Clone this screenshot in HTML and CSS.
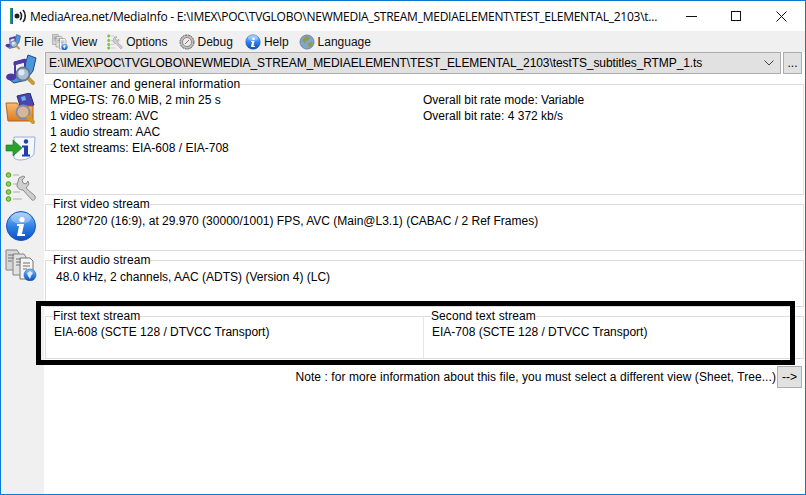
FILE: index.html
```html
<!DOCTYPE html>
<html lang="en">
<head>
    <meta charset="UTF-8">
    <title>MediaArea.net/MediaInfo</title>
    <link rel="stylesheet" href="styles.css">
</head>
<body>
    <svg class="defs" width="0" height="0">
        <defs>
            <linearGradient id="ballBlue" x1="0" y1="0" x2="0" y2="1">
                <stop offset="0" stop-color="#8cc4fa"/>
                <stop offset="0.55" stop-color="#2a7ee6"/>
                <stop offset="1" stop-color="#0d4fb8"/>
            </linearGradient>
            <linearGradient id="folderOrange" x1="0" y1="0" x2="0" y2="1">
                <stop offset="0" stop-color="#f8bd74"/>
                <stop offset="1" stop-color="#dd7a1e"/>
            </linearGradient>
            <symbol id="lens" viewBox="0 0 32 32">
                <path d="M24 25l4 4" stroke="#c89a3a" stroke-width="4" stroke-linecap="round"/>
                <circle cx="18" cy="20" r="6.500" fill="#a9bfd6" stroke="#66788f" stroke-width="1.800"/>
                <circle cx="16.500" cy="18.500" r="3" fill="#dfe9f2"/>
            </symbol>
            <symbol id="music" viewBox="0 0 32 32">
                <path d="M23 1l8 3-3 13-7 9-12 3-4-3 12-5z" fill="#4a97dc" stroke="#2b3f80"/>
                <path d="M9 8l11-3v3L9 11z" fill="#4b38a8" stroke="#4b38a8"/>
                <path d="M10 8v15M20 5v12" stroke="#4b38a8" stroke-width="2"/>
                <ellipse cx="6" cy="23" rx="5" ry="3.500" fill="#4b38a8"/>
                <use href="#lens"/>
            </symbol>
            <symbol id="folder" viewBox="0 0 32 32">
                <path d="M12 3l13-3 4 12-13 4z" fill="#4a46b0" stroke="#2e2b78"/>
                <path d="M16 4l4-1 1 4-4 1z" fill="#6fb0e8"/>
                <path d="M1 10h11l2 3h14v15H3z" fill="url(#folderOrange)" stroke="#b2651c"/>
                <circle cx="18" cy="19" r="6.500" fill="#d8b49a" stroke="#7e8ba0" stroke-width="1.800"/>
                <path d="M23 24l5 5" stroke="#c89a3a" stroke-width="4" stroke-linecap="round"/>
            </symbol>
            <symbol id="docInfo" viewBox="0 0 32 32">
                <path d="M9 5h21l-1 17c-2 4-9 6-14 6-3 0-5-1-6-2z" fill="#f4f7fc" stroke="#9cb0d4"/>
                <path d="M1 13h7V8l9 8-9 8v-5H1z" fill="#2aa12a" stroke="#17701a" stroke-width="0.6"/>
                <circle cx="21" cy="9.500" r="2.200" fill="#1f3fb0"/>
                <path d="M17 13.500h6v9h2v2h-8v-2h2v-7h-2z" fill="#1f3fb0"/>
            </symbol>
            <symbol id="tools" viewBox="0 0 32 32">
                <g fill="#8fd14f" stroke="#4f9c1f">
                    <circle cx="3.500" cy="4" r="2.300"/>
                    <circle cx="3.500" cy="13" r="2.300"/>
                    <circle cx="3.500" cy="21" r="2.300"/>
                    <circle cx="3.500" cy="28" r="2.300"/>
                </g>
                <path d="M8 4h6M8 13h5M8 21h7M8 28h9" stroke="#c4c4c4" stroke-width="1.500"/>
                <path d="M14 7l4-2 2 1-3 3 1 3 3 1 2-3 1 3-3 4 9 8c1 3-1 5-3 4l-9-10c-3 0-6-2-6-5z" fill="#cfcfcf" stroke="#8a8a8a"/>
            </symbol>
            <symbol id="infoBall" viewBox="0 0 32 32">
                <circle cx="16" cy="16" r="14.500" fill="url(#ballBlue)" stroke="#1a57b4"/>
                <ellipse cx="16" cy="8" rx="10" ry="5.500" fill="#fff" fill-opacity="0.3"/>
                <circle cx="17" cy="9.500" r="2.600" fill="#fff"/>
                <path d="M12 14h7l-2 10h3v2h-8l2-10h-2z" fill="#fff"/>
            </symbol>
            <symbol id="docs" viewBox="0 0 32 32">
                <path d="M1 1h11l2 3v17H1z" fill="#d6d6d6" stroke="#848484"/>
                <path d="M8 5h11l2 3v18H8z" fill="#e2e2e2" stroke="#848484"/>
                <path d="M15 9h10l3 3v18H15z" fill="#f4f4f4" stroke="#767676"/>
                <path d="M3 6h6M3 9h6M3 12h4M11 10h5M11 13h5M11 16h4M18 14h7M18 17h7M18 20h4" stroke="#707070"/>
                <circle cx="25" cy="26" r="6" fill="url(#ballBlue)" stroke="#1a57b4" stroke-width="0.6"/>
                <path d="M22 24l3-2 3 2-2 3-1 3-2-3z" fill="#dbe9f8"/>
            </symbol>
            <symbol id="debug" viewBox="0 0 16 16">
                <circle cx="8" cy="8" r="7" fill="#bdbdbd" stroke="#5c5c5c" stroke-dasharray="2 0.800"/>
                <circle cx="8" cy="8" r="4.500" fill="#ededed" stroke="#8a8a8a"/>
                <path d="M6 10l4-4" stroke="#b5574c" stroke-width="1"/>
            </symbol>
            <symbol id="globe" viewBox="0 0 16 16">
                <circle cx="8" cy="8" r="7" fill="#7fa6cf" stroke="#6d8aa8"/>
                <path d="M3 6l4-4 4 1-1 3-3 1-1 3zM9 9l4-1 1 2-3 4-2-2z" fill="#8f9c4f"/>
            </symbol>
        </defs>
    </svg>

    <div class="window">
        <div class="titlebar">
            <svg class="app-icon" width="18" height="18" viewBox="0 0 18 18">
                <path d="M1.500 1v16" stroke="#1aa64a" stroke-width="1"/>
                <path d="M2.500 1v16" stroke="#d0342c" stroke-width="1"/>
                <path d="M3.500 1v16" stroke="#2a55c8" stroke-width="1"/>
                <circle cx="8" cy="9" r="2.500" fill="#222"/>
                <path d="M11 5c2 2 2 6 0 8M14 3c3 3 3 9 0 12" fill="none" stroke="#222" stroke-width="1.600"/>
            </svg>
            <span class="title">MediaArea.net/MediaInfo - E:\IMEX\POC\TVGLOBO\NEWMEDIA_STREAM_MEDIAELEMENT\TEST_ELEMENTAL_2103\t...</span>
            <div class="controls">
                <svg width="11" height="11" viewBox="0 0 11 11"><path d="M0 5.500h11" stroke="#111"/></svg>
                <svg width="11" height="11" viewBox="0 0 11 11"><rect x="0.500" y="0.500" width="9" height="9" fill="none" stroke="#111"/></svg>
                <svg width="11" height="11" viewBox="0 0 11 11"><path d="M0.500 0.500l10 10M10.500 0.500l-10 10" stroke="#111"/></svg>
            </div>
        </div>

        <div class="menu">
            <span class="menu-item"><svg class="small"><use href="#music"/></svg>File</span>
            <span class="menu-item"><svg class="small"><use href="#docs"/></svg>View</span>
            <span class="menu-item"><svg class="small"><use href="#tools"/></svg>Options</span>
            <span class="menu-item"><svg class="small"><use href="#debug"/></svg>Debug</span>
            <span class="menu-item"><svg class="small"><use href="#infoBall"/></svg>Help</span>
            <span class="menu-item"><svg class="small"><use href="#globe"/></svg>Language</span>
        </div>

        <div class="main">
            <div class="sidebar">
                <svg class="big"><use href="#music"/></svg>
                <svg class="big"><use href="#folder"/></svg>
                <svg class="big"><use href="#docInfo"/></svg>
                <svg class="big"><use href="#tools"/></svg>
                <svg class="big"><use href="#infoBall"/></svg>
                <svg class="big"><use href="#docs"/></svg>
            </div>

            <div class="content">
                <div class="path-row">
                    <div class="combo">
                        <span>E:\IMEX\POC\TVGLOBO\NEWMEDIA_STREAM_MEDIAELEMENT\TEST_ELEMENTAL_2103\testTS_subtitles_RTMP_1.ts</span>
                        <svg width="10" height="6" viewBox="0 0 10 6"><path d="M0.500 0.500L5 5l4.500-4.500" fill="none" stroke="#444"/></svg>
                    </div>
                    <div class="btn browse">...</div>
                </div>

                <fieldset class="group general">
                    <legend>Container and general information</legend>
                    <div class="columns">
                        <div class="col">
                            <div>MPEG-TS: 76.0 MiB, 2 min 25 s</div>
                            <div>1 video stream: AVC</div>
                            <div>1 audio stream: AAC</div>
                            <div>2 text streams: EIA-608 / EIA-708</div>
                        </div>
                        <div class="col">
                            <div>Overall bit rate mode: Variable</div>
                            <div>Overall bit rate: 4 372 kb/s</div>
                        </div>
                    </div>
                </fieldset>

                <fieldset class="group stream">
                    <legend>First video stream</legend>
                    <div class="stream-text">1280*720 (16:9), at 29.970 (30000/1001) FPS, AVC (Main@L3.1) (CABAC / 2 Ref Frames)</div>
                </fieldset>

                <fieldset class="group stream">
                    <legend>First audio stream</legend>
                    <div class="stream-text">48.0 kHz, 2 channels, AAC (ADTS) (Version 4) (LC)</div>
                </fieldset>

                <div class="text-streams">
                    <fieldset class="group text-group">
                        <legend>First text stream</legend>
                        <div class="text-line">EIA-608 (SCTE 128 / DTVCC Transport)</div>
                    </fieldset>
                    <fieldset class="group text-group">
                        <legend>Second text stream</legend>
                        <div class="text-line">EIA-708 (SCTE 128 / DTVCC Transport)</div>
                    </fieldset>
                    <div class="highlight"></div>
                </div>

                <div class="note-row">
                    <span class="note">Note : for more information about this file, you must select a different view (Sheet, Tree...)</span>
                    <div class="btn next">--&gt;</div>
                </div>
            </div>
        </div>
    </div>
</body>
</html>
```

FILE: styles.css
```css
body {
    margin: 0;
    background: #fff;
    color: #000;
    font-family: "Liberation Sans", Arial, sans-serif;
    font-size: 12px;
}

.defs {
    display: block;
    height: 0;
}

.window {
    box-sizing: border-box;
    width: 806px;
    height: 495px;
    border: 1px solid #0a7ad6;
    display: flex;
    flex-direction: column;
    overflow: hidden;
}

.titlebar {
    height: 30px;
    flex: none;
    display: flex;
    align-items: center;
    background: #fff;
}

.app-icon {
    margin-left: 8px;
    margin-right: 3px;
}

.title {
    font-family: "Open Sans", sans-serif;
    font-size: 12px;
    white-space: nowrap;
    letter-spacing: -0.24px;
}

.controls {
    margin-left: auto;
    display: flex;
    gap: 34px;
    padding-right: 18px;
}

.menu {
    height: 21px;
    flex: none;
    display: flex;
    align-items: center;
    background: #f0f0f0;
    padding-left: 4px;
}

.menu-item {
    display: flex;
    align-items: center;
    gap: 3px;
    margin-right: 10px;
    color: #111;
}

.menu-item:first-child {
    margin-right: 9px;
}

.menu-item:nth-child(3) {
    margin-right: 11px;
}

.menu-item:nth-child(4) {
    margin-right: 12px;
}

.small {
    width: 16px;
    height: 16px;
}

.main {
    flex: 1;
    display: flex;
    min-height: 0;
}

.sidebar {
    width: 43px;
    flex: none;
    background: #f0f0f0;
    display: flex;
    flex-direction: column;
    align-items: flex-start;
    gap: 7px;
    padding: 2px 0 0 4px;
    box-sizing: border-box;
}

.big {
    width: 32px;
    height: 32px;
}

.content {
    flex: 1;
    min-width: 0;
    padding-left: 1px;
}

.path-row {
    display: flex;
    gap: 2px;
    height: 22px;
    margin-right: 3px;
}

.combo {
    flex: 1;
    box-sizing: border-box;
    display: flex;
    align-items: center;
    justify-content: space-between;
    padding: 0 6px 0 3px;
    background: #e1e1e1;
    border: 1px solid #adadad;
    white-space: nowrap;
    letter-spacing: -0.09px;
}

.btn {
    box-sizing: border-box;
    display: flex;
    align-items: center;
    justify-content: center;
    background: #e1e1e1;
    border: 1px solid #adadad;
}

.browse {
    width: 19px;
}

.group {
    box-sizing: border-box;
    margin: 0;
    min-width: 0;
    padding: 0 0 0 7px;
    border: 1px solid #dcdcdc;
    border-right-color: #e6e6e6;
    line-height: 16px;
}

.group legend {
    padding: 0;
    line-height: 14px;
    letter-spacing: 0.08px;
}

.general {
    height: 118px;
    margin: 3px 1px 0 0;
}

.general legend {
    letter-spacing: 0.18px;
}

.columns {
    display: flex;
    padding-top: 1px;
    margin-left: -3px;
}

.col {
    width: 373px;
}

.stream {
    height: 54px;
    margin: 2px 1px 0 0;
}

.stream-text {
    padding-top: 2px;
    margin-left: 3px;
}

.text-streams {
    position: relative;
    display: flex;
    margin: 2px 1px 0 0;
}

.text-group {
    height: 50px;
    width: 379px;
    flex: none;
}

.text-group + .text-group {
    flex: 1;
    border-left: 0;
}

.text-line {
    padding-top: 1px;
    margin-left: 1px;
}

.highlight {
    position: absolute;
    left: -9px;
    top: -8px;
    width: 759px;
    height: 64px;
    box-sizing: border-box;
    border: 5px solid #000;
}

.note-row {
    display: flex;
    align-items: center;
    justify-content: flex-end;
    gap: 1px;
    margin: 7px 3px 0 0;
    height: 22px;
}

.note {
    letter-spacing: 0.07px;
}

.next {
    width: 25px;
    height: 22px;
}
```
